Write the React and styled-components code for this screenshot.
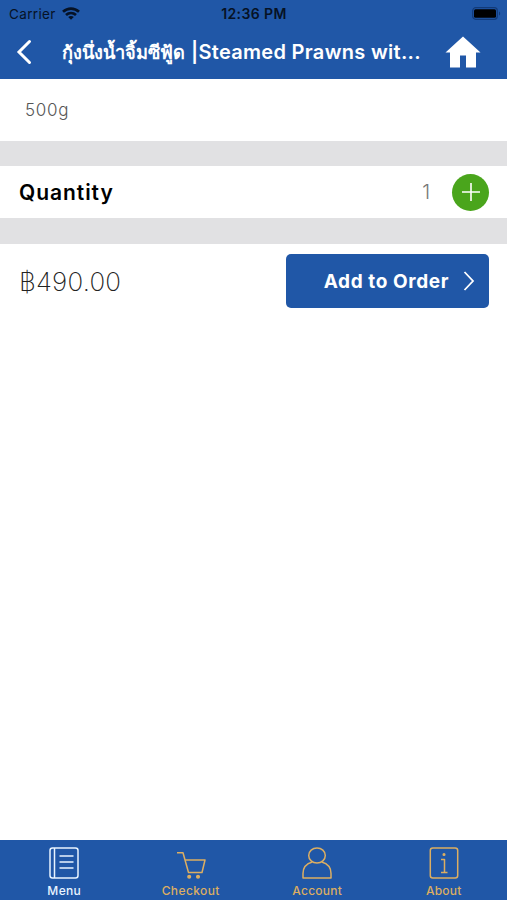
import React from 'react';
import styled, { createGlobalStyle } from 'styled-components';

const blue = '#2057a7';
const gold = '#dcae62';

const App = () => (
  <Screen>
    <GlobalStyle />
    <StatusBar>
      <Carrier>
        <span>Carrier</span>
        <WifiIcon />
      </Carrier>
      <Time>12:36 PM</Time>
      <BatteryIcon />
    </StatusBar>
    <Header>
      <BackButton aria-label="Back">
        <svg width="16" height="26" viewBox="0 0 16 26" fill="none" stroke="#fff" strokeWidth="3">
          <path d="M13.5 2.5L3 13L13.5 23.5" strokeLinecap="round" />
        </svg>
      </BackButton>
      <Title>
        <ThaiName>กุ้งนึ่งน้ำจิ้มซีฟู้ด</ThaiName>
        <EnglishName>|Steamed Prawns wit...</EnglishName>
      </Title>
      <HomeButton aria-label="Home">
        <svg width="36" height="32" viewBox="0 0 36 32" fill="#fff">
          <path d="M18 .5L35.5 16.5H31V31.5H21V19.5H15V31.5H5V16.5H.5Z" />
        </svg>
      </HomeButton>
    </Header>
    <Description>
      <Weight>500g</Weight>
    </Description>
    <Divider $height="25px" />
    <QuantityRow>
      <QuantityLabel>Quantity</QuantityLabel>
      <Count>1</Count>
      <AddButton aria-label="Increase quantity">
        <svg width="18" height="18" viewBox="0 0 18 18" stroke="#fff" strokeWidth="1.6">
          <path d="M9 0V18M0 9H18" />
        </svg>
      </AddButton>
    </QuantityRow>
    <Divider $height="26px" />
    <OrderRow>
      <Price>฿490.00</Price>
      <OrderButton>
        <OrderText>Add to Order</OrderText>
        <svg width="12" height="20" viewBox="0 0 12 20" fill="none" stroke="#fff" strokeWidth="1.8">
          <path d="M1.5 1L10 10L1.5 19" />
        </svg>
      </OrderButton>
    </OrderRow>
    <TabBar>
      <Tab $color="#e8f4ff">
        <MenuIcon />
        <TabLabel $spacing="0.35px">Menu</TabLabel>
      </Tab>
      <Tab $color={gold}>
        <CartIcon />
        <TabLabel $spacing="0.4px">Checkout</TabLabel>
      </Tab>
      <Tab $color={gold}>
        <AccountIcon />
        <TabLabel $spacing="0.25px">Account</TabLabel>
      </Tab>
      <Tab $color={gold}>
        <AboutIcon />
        <TabLabel $spacing="0.25px">About</TabLabel>
      </Tab>
    </TabBar>
  </Screen>
);

export default App;

const WifiIcon = () => (
  <svg width="18" height="13" viewBox="0 0 18 13" fill="none" stroke="#061225" strokeWidth="2.7">
    <path d="M1 4.8C5.6 .6 12.4 .6 17 4.8" />
    <path d="M4 8C6.9 5.4 11.1 5.4 14 8" />
    <path d="M9 12.8L6.2 10C7.8 8.6 10.2 8.6 11.8 10Z" fill="#061225" stroke="none" />
  </svg>
);

const BatteryIcon = () => (
  <svg width="29" height="13" viewBox="0 0 29 13">
    <rect x=".7" y=".7" width="24.6" height="11.6" rx="3" fill="none" stroke="#123a78" strokeWidth="1.2" />
    <rect x="2" y="2.2" width="22" height="8.6" rx="1.5" fill="#000" />
    <path d="M27 4.5C28.6 5.2 28.6 7.8 27 8.5Z" fill="#123a78" />
  </svg>
);

const MenuIcon = () => (
  <TabIcon viewBox="0 0 32 34">
    <rect x="2" y="2" width="28" height="30" rx="2.5" />
    <path d="M6.5 2V32M11.5 10H25.5M11.5 16H25.5M11.5 22H25.5" />
  </TabIcon>
);

const CartIcon = () => (
  <TabIcon viewBox="0 0 32 34">
    <path d="M2 6.7H8L13.5 26.5H27L30 14H10" />
    <circle cx="14.2" cy="30.7" r="1.3" fill="currentColor" />
    <circle cx="23" cy="30.7" r="1.3" fill="currentColor" />
  </TabIcon>
);

const AccountIcon = () => (
  <TabIcon viewBox="0 0 32 34">
    <ellipse cx="16" cy="9.5" rx="8.3" ry="7.6" />
    <path d="M11.3 16C5.5 17.6 2 22 2 27.5V32H30V27.5C30 22 26.5 17.6 20.7 16" />
  </TabIcon>
);

const AboutIcon = () => (
  <TabIcon viewBox="0 0 32 34">
    <rect x="2.3" y="2" width="27.4" height="30" rx="2.5" />
    <path d="M13 13.5H16.5V26.5M13 26.5H19.5" />
    <circle cx="16" cy="8.5" r=".8" fill="currentColor" />
  </TabIcon>
);

const GlobalStyle = createGlobalStyle`
  * {
    box-sizing: border-box;
  }

  body {
    margin: 0;
    background: #fff;
    font-family: Inter, 'Liberation Sans', sans-serif;
  }

  button {
    border: 0;
    padding: 0;
    background: none;
    font-family: inherit;
  }

  svg {
    display: block;
    flex-shrink: 0;
  }
`;

const Screen = styled.div`
  display: flex;
  flex-direction: column;
  height: 100vh;
  overflow: hidden;
  background: #fff;
`;

const StatusBar = styled.div`
  display: grid;
  grid-template-columns: 1fr auto 1fr;
  align-items: center;
  height: 27px;
  padding: 0 6px 0 9px;
  background: ${blue};
  color: #061225;

  > svg {
    justify-self: end;
  }
`;

const Carrier = styled.div`
  display: flex;
  align-items: center;
  gap: 6px;
  font-size: 13.5px;
  letter-spacing: 0.35px;
`;

const Time = styled.div`
  font-size: 14px;
  font-weight: 600;
  letter-spacing: 0.4px;
  margin-right: 2px;
`;

const Header = styled.header`
  display: flex;
  align-items: center;
  height: 52px;
  padding: 0 26px 2px 16px;
  background: ${blue};
  color: #fff;
`;

const BackButton = styled.button`
  width: 46px;
`;

const Title = styled.h1`
  display: flex;
  align-items: center;
  gap: 6px;
  width: 358px;
  margin: 0;
  white-space: nowrap;
`;

const ThaiName = styled.span`
  width: 123px;
  font-size: 18.2px;
  line-height: 30px;
  font-weight: 600;
`;

const EnglishName = styled.span`
  font-size: 20px;
  line-height: 30px;
  font-weight: 600;
  letter-spacing: 0.3px;
`;

const HomeButton = styled.button`
  margin-left: auto;
`;

const Description = styled.section`
  height: 62px;
  padding: 20px 25px;
`;

const Weight = styled.div`
  font-size: 17px;
  line-height: 22px;
  font-weight: 300;
  letter-spacing: 0.7px;
  color: #555;
`;

const Divider = styled.div`
  height: ${({ $height }) => $height};
  background: #e1e1e3;
`;

const QuantityRow = styled.section`
  display: flex;
  align-items: center;
  height: 52px;
  padding: 0 18px 0 19px;
`;

const QuantityLabel = styled.div`
  font-size: 21px;
  font-weight: 600;
  letter-spacing: 0.95px;
  color: #000;
`;

const Count = styled.div`
  margin-left: auto;
  margin-right: 22px;
  font-size: 20px;
  font-weight: 300;
  color: #777;
`;

const AddButton = styled.button`
  display: flex;
  align-items: center;
  justify-content: center;
  width: 37px;
  height: 37px;
  border-radius: 50%;
  background: #4aa51c;
`;

const OrderRow = styled.section`
  display: flex;
  align-items: center;
  justify-content: space-between;
  padding: 10px 18px 0 19px;
`;

const Price = styled.div`
  font-size: 26px;
  font-weight: 200;
  letter-spacing: 0.2px;
  color: #222;
`;

const OrderButton = styled.button`
  display: flex;
  align-items: center;
  justify-content: flex-end;
  gap: 14px;
  width: 203px;
  height: 54px;
  padding-right: 14px;
  border-radius: 5px;
  background: ${blue};
  color: #fff;
`;

const OrderText = styled.span`
  font-size: 19px;
  font-weight: 700;
  letter-spacing: 0.6px;
  white-space: nowrap;
`;

const TabBar = styled.nav`
  display: grid;
  grid-template-columns: repeat(4, 1fr);
  height: 60px;
  margin-top: auto;
  padding-left: 1px;
  background: ${blue};
`;

const Tab = styled.a`
  display: flex;
  flex-direction: column;
  align-items: center;
  padding-top: 6px;
  color: ${({ $color }) => $color};
`;

const TabIcon = styled.svg`
  width: 32px;
  height: 34px;
  fill: none;
  stroke: currentColor;
  stroke-width: 1.5;
  stroke-linejoin: round;
`;

const TabLabel = styled.span`
  margin-top: 3px;
  font-size: 12px;
  line-height: 16px;
  font-weight: 500;
  letter-spacing: ${({ $spacing }) => $spacing};
`;
